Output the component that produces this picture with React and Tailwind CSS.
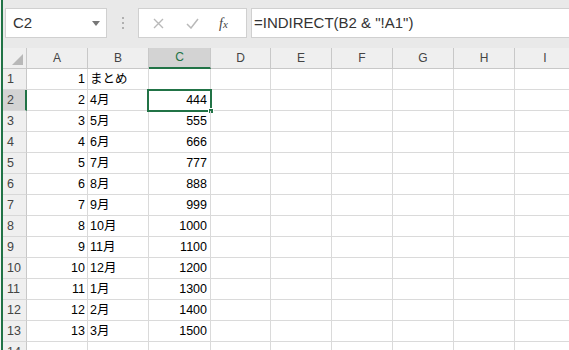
const COLS = [
  { k: "A", w: "w-[61px]" },
  { k: "B", w: "w-[61px]" },
  { k: "C", w: "w-[62px]" },
  { k: "D", w: "w-[60px]" },
  { k: "E", w: "w-[61px]" },
  { k: "F", w: "w-[61px]" },
  { k: "G", w: "w-[61px]" },
  { k: "H", w: "w-[61px]" },
  { k: "I", w: "w-[61px]" },
];

const ROWS = [
  ["1", "まとめ", ""],
  ["2", "4月", "444"],
  ["3", "5月", "555"],
  ["4", "6月", "666"],
  ["5", "7月", "777"],
  ["6", "8月", "888"],
  ["7", "9月", "999"],
  ["8", "10月", "1000"],
  ["9", "11月", "1100"],
  ["10", "12月", "1200"],
  ["11", "1月", "1300"],
  ["12", "2月", "1400"],
  ["13", "3月", "1500"],
  ["14", "", ""],
];

const font = "font-['Liberation_Sans','Noto_Sans_CJK_JP',sans-serif]";

function FormulaBar() {
  return (
    <div className="flex h-[48px] shrink-0 items-start bg-[#e9e9e9] pl-[2px] pt-[8px]">
      <div className="flex h-[30px] w-[102px] items-center justify-between border border-[#d0d0d0] bg-white pl-[7px] pr-[6px]">
        <span className="text-[15px] text-[#333]">C2</span>
        <svg width="8" height="5" viewBox="0 0 8 5">
          <path d="M0 0h8L4 5z" fill="#777" />
        </svg>
      </div>
      <div className="flex h-[30px] w-[31px] flex-col items-center justify-center gap-[3px]">
        <span className="h-[2px] w-[2px] bg-[#b0b0b0]" />
        <span className="h-[2px] w-[2px] bg-[#b0b0b0]" />
        <span className="h-[2px] w-[2px] bg-[#b0b0b0]" />
      </div>
      <div className="flex h-[30px] w-[109px] items-center border border-[#d0d0d0] bg-white">
        <svg className="ml-[14px]" width="11" height="11" viewBox="0 0 11 11">
          <path d="M1 1l9 9M10 1l-9 9" stroke="#b9b9b9" strokeWidth="1.4" />
        </svg>
        <svg className="ml-[22px]" width="13" height="11" viewBox="0 0 13 11">
          <path d="M1 6l4 4 7-9" stroke="#b9b9b9" strokeWidth="1.5" fill="none" />
        </svg>
        <span className="ml-[20px] font-['Liberation_Serif',serif] text-[14px] italic text-[#444]">
          f<span className="text-[11px]">x</span>
        </span>
      </div>
      <div className="ml-[4px] flex h-[30px] flex-1 items-center border border-r-0 border-[#d0d0d0] bg-white pl-[2px]">
        <span className="whitespace-nowrap text-[15px] text-[#333]">=INDIRECT(B2 &amp; "!A1")</span>
      </div>
    </div>
  );
}

function HeaderRow() {
  return (
    <div className="flex h-[21px] shrink-0 bg-[#efefef]">
      <div className="relative w-[24px] shrink-0 border-r border-b border-[#c8c8c8]">
        <svg className="absolute right-[3px] bottom-[3px]" width="11" height="11" viewBox="0 0 11 11">
          <path d="M11 0v11H0z" fill="#b8b8b8" />
        </svg>
      </div>
      {COLS.map((c) =>
        c.k === "C" ? (
          <div
            key={c.k}
            className={`${c.w} shrink-0 border-r border-[#c8c8c8] border-b-2 border-b-[#217346] bg-[#d3d3d3] text-center text-[12px] leading-[19px] text-[#217346]`}
          >
            {c.k}
          </div>
        ) : (
          <div
            key={c.k}
            className={`${c.w} shrink-0 border-r border-b border-[#c8c8c8] text-center text-[12px] leading-[20px] text-[#444]`}
          >
            {c.k}
          </div>
        )
      )}
    </div>
  );
}

function Row({ r, i }) {
  const sel = i === 1;
  return (
    <div className="flex h-[21px] shrink-0">
      <div
        className={`w-[24px] shrink-0 border-b border-[#d8d8d8] pl-[4px] text-[12.5px] leading-[20px] text-[#444] ${
          sel ? "border-r-2 border-r-[#217346] bg-[#d3d3d3]" : "border-r border-r-[#c8c8c8] bg-[#efefef]"
        }`}
      >
        {r[0]}
      </div>
      <div className="w-[61px] shrink-0 border-r border-b border-[#dadada] pr-[2px] text-right text-[12.5px] leading-[20px] text-black">
        {i < 13 ? r[0] : ""}
      </div>
      <div className="w-[61px] shrink-0 border-r border-b border-[#dadada] pl-[2px] text-[12.5px] leading-[20px] text-black">
        {r[1]}
      </div>
      <div className="relative w-[62px] shrink-0 border-r border-b border-[#dadada] pr-[3px] text-right text-[12.5px] leading-[20px] text-black">
        {r[2]}
        {sel && (
          <>
            <div className="absolute -top-[1px] -left-[2px] -right-[2px] -bottom-[2px] border-2 border-[#217346]" />
            <div className="absolute -right-[4px] -bottom-[4px] h-[6px] w-[6px] border border-white bg-[#217346]" />
          </>
        )}
      </div>
      {COLS.slice(3).map((c) => (
        <div key={c.k} className={`${c.w} shrink-0 border-r border-b border-[#dadada]`} />
      ))}
    </div>
  );
}

export default function App() {
  return (
    <div className={`${font} flex h-[350px] w-[569px] overflow-hidden bg-white`}>
      <div className="w-[1px] shrink-0 bg-[#f4f4f4]" />
      <div className="w-[2px] shrink-0 bg-[#217346]" />
      <div className="flex min-w-0 flex-1 flex-col">
        <FormulaBar />
        <HeaderRow />
        {ROWS.map((r, i) => (
          <Row key={i} r={r} i={i} />
        ))}
      </div>
    </div>
  );
}
